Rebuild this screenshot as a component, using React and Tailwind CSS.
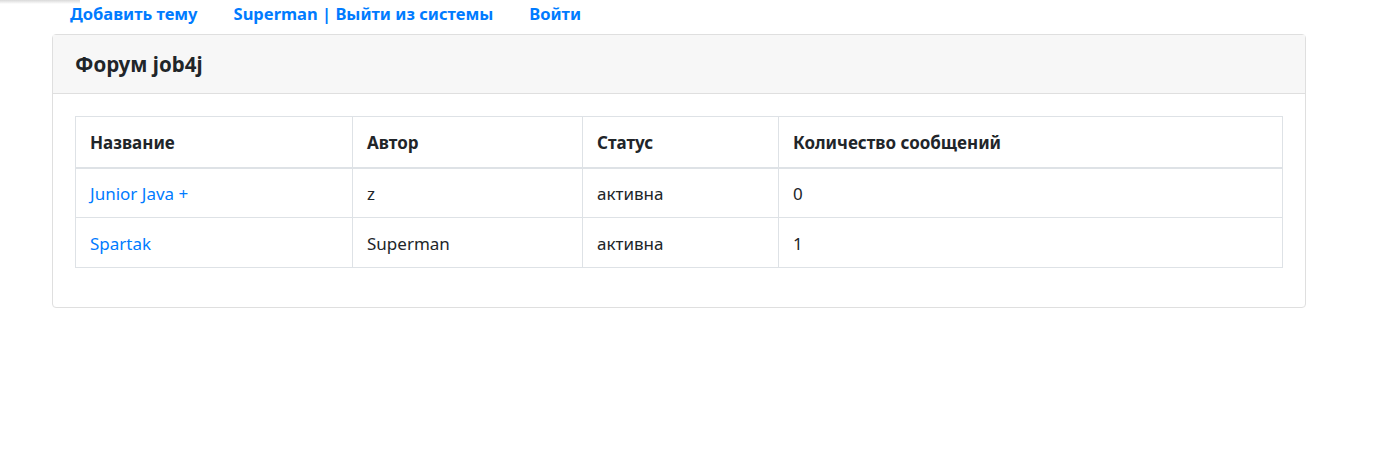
const topics = [
  { name: 'Junior Java +', author: 'z', status: 'активна', count: '0' },
  { name: 'Spartak', author: 'Superman', status: 'активна', count: '1' },
];

export default function App() {
  return (
    <div
      className="relative min-h-screen bg-white text-[#212529] text-[17px]"
      style={{ fontFamily: '"Noto Sans", "Open Sans", sans-serif' }}
    >
      {/* faint shadow left at the top corner */}
      <div className="absolute top-0 left-0 w-[80px] h-[4px] bg-gradient-to-b from-[#d9d9d9] to-white" />

      <ul className="flex gap-[36px] pl-[70px] h-[34px] font-bold text-[16.5px] text-[#007bff]">
        <li className="leading-[27px]">
          <a href="#">Добавить тему</a>
        </li>
        <li className="leading-[27px]">
          <a href="#">Superman | Выйти из системы</a>
        </li>
        <li className="leading-[27px]">
          <a href="#">Войти</a>
        </li>
      </ul>

      <div className="ml-[52px] w-[1254px] border border-[#dfdfdf] rounded-[4px]">
        <div className="bg-[#f7f7f7] border-b border-[#dfdfdf] px-[22px] h-[59px] flex items-center">
          <h4 className="text-[20.5px] font-bold">Форум job4j</h4>
        </div>
        <div className="px-[22px] pt-[22px] pb-[39px]">
          <table className="w-full border-collapse border border-[#dee2e6]">
            <thead>
              <tr className="h-[51px] font-bold">
                <th className="w-[277px] border border-[#dee2e6] border-b-2 px-[14px] pt-[2px] text-left">Название</th>
                <th className="w-[230px] border border-[#dee2e6] border-b-2 px-[14px] pt-[2px] text-left">Автор</th>
                <th className="w-[196px] border border-[#dee2e6] border-b-2 px-[14px] pt-[2px] text-left">Статус</th>
                <th className="border border-[#dee2e6] border-b-2 px-[14px] pt-[2px] text-left">Количество сообщений</th>
              </tr>
            </thead>
            <tbody>
              {topics.map((t) => (
                <tr key={t.name} className="h-[50px]">
                  <td className="border border-[#dee2e6] px-[14px] pt-[2px]">
                    <a href="#" className="text-[#007bff]">
                      {t.name}
                    </a>
                  </td>
                  <td className="border border-[#dee2e6] px-[14px] pt-[2px]">{t.author}</td>
                  <td className="border border-[#dee2e6] px-[14px] pt-[2px]">{t.status}</td>
                  <td className="border border-[#dee2e6] px-[14px] pt-[2px]">{t.count}</td>
                </tr>
              ))}
            </tbody>
          </table>
        </div>
      </div>
    </div>
  );
}
